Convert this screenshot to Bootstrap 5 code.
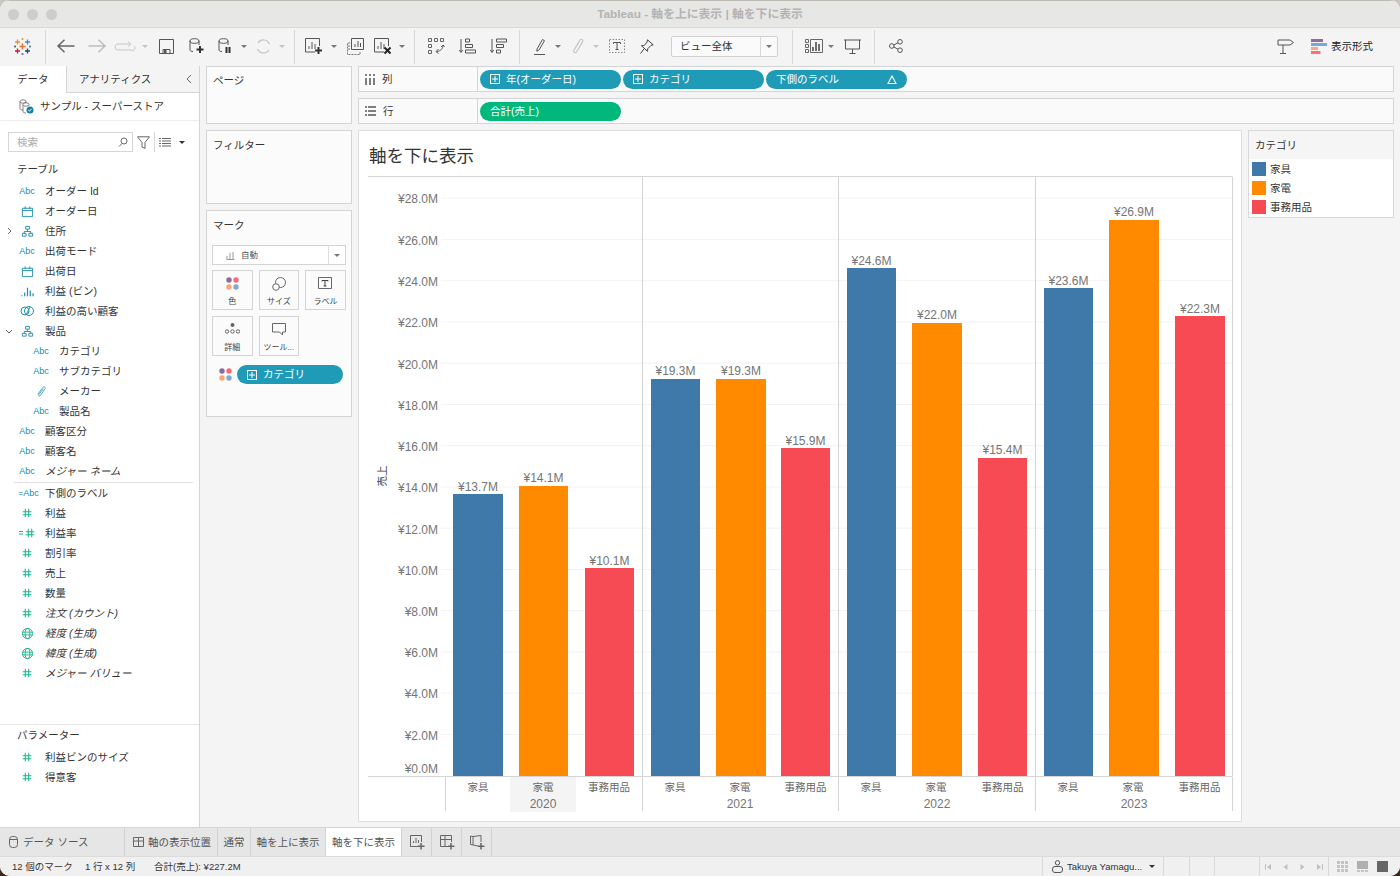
<!DOCTYPE html>
<html lang="ja">
<head>
<meta charset="utf-8">
<title>Tableau - 軸を上に表示 | 軸を下に表示</title>
<link href="https://cdn.jsdelivr.net/npm/bootstrap@5.3.0/dist/css/bootstrap.min.css" rel="stylesheet">
<style>
html,body{height:876px;overflow:hidden;}
body{background:linear-gradient(#c9c6bd 0 50%,#3b2a18 50%);font-family:"Liberation Sans","Noto Sans CJK JP",sans-serif;font-size:10.5px;color:#333;line-height:1.2;}
.win{height:876px;width:1400px;border-radius:10px;overflow:hidden;background:#f4f4f4;}
.titlebar{height:28px;background:#e7e7e5;border-bottom:1px solid #dadada;border-top:1px solid #bdbbb4;flex:none;}
.tl{width:11px;height:11px;border-radius:50%;background:#cdcdcb;}
.tl-wrap{left:8px;top:8px;gap:8px;}
.wintitle{font-size:11.8px;font-weight:700;color:#b3b3b3;}
.tbar{height:38px;flex:none;background:#f4f4f4;padding-right:27px;}
.tc{display:flex;align-items:center;justify-content:center;flex:none;height:38px;padding-bottom:2px;}
.tc svg{display:block;overflow:visible;}
.sepv{width:1px;height:34px;background:#d8d8d8;flex:none;}
.w4{width:4px}.w5{width:5px}.w8{width:8px}.w10{width:10px}.w12{width:12px}.w14{width:14px}.w15{width:15px}.w16{width:16px}.w18{width:18px}.w20{width:20px}.w22{width:22px}.w24{width:24px}.w26{width:26px}.w27{width:27px}.w28{width:28px}.w30{width:30px}.w32{width:32px}.w34{width:34px}.w42{width:42px}.w45{width:45px}
.car{width:0;height:0;border-left:3px solid transparent;border-right:3px solid transparent;border-top:3.5px solid #777;}
.car-off{border-top-color:#c4c4c4;}
.car-dark{border-top-color:#333;border-left-width:3.500px;border-right-width:3.500px;}
.viewsel{width:107px;height:21px;border:1px solid #d0d0d0;background:#fafafa;border-radius:2px;font-size:10.5px;margin-bottom:2px;}
.viewsel .lbl{flex:1;padding-left:8px;}
.viewsel .drop{width:17px;height:100%;border-left:1px solid #d8d8d8;}
.showme{font-size:10.5px;color:#222;margin-bottom:2px;}
.showme-ic{margin-left:17px;margin-right:4px;}
.mainrow{height:761px;flex:none;}
.side{width:200px;flex:none;background:#fff;border-right:1px solid #d4d4d4;}
.sidetabs{height:27px;flex:none;}
.stab{height:27px;font-size:10.5px;}
.stab-a{width:67px;padding-left:17px;border-right:1px solid #d4d4d4;}
.stab-b{flex:1;background:#f4f4f4;border-bottom:1px solid #d4d4d4;padding-left:12px;padding-right:7px;}
.dsrow{height:28px;flex:none;border-bottom:1px solid #ececec;padding-left:19px;gap:6px;}
.srch{padding:11px 0 0 8px;height:31px;flex:none;gap:4px;}
.srchbox{width:125px;height:20px;border:1px solid #d6d6d6;color:#aaa;font-size:10.5px;padding:0 4px 0 8px;}
.shead{height:22px;padding-left:17px;flex:none;font-size:10.5px;}
.shead-top{margin-top:6px;}
.flist{padding-top:1px;}
.fld{height:20px;flex:none;}
.fchev{width:18px;flex:none;}
.fic{width:18px;flex:none;color:#0f8db3;font-size:9px;}
.fname{margin-left:9px;white-space:nowrap;color:#333;}
.lvl{padding-left:14px;}
.ital{font-style:italic;}
.flsep{height:1px;background:#e2e2e2;margin:1px 6px 0 14px;flex:none;}
.params{height:103px;flex:none;border-top:1px solid #e6e6e6;}
.params .shead{height:20px;margin-bottom:2px;}
.midcol{width:146px;margin-left:6px;gap:6px;flex:none;}
.pane{background:#fbfbfb;border:1px solid #d4d4d4;border-radius:0;flex:none;}
.pane-t{padding:7px 6px 0;font-size:10.5px;line-height:13px;}
.flt .pane-t,.mk .pane-t{padding-top:8px;}
.pg{height:58px}.flt{height:74px}.mk{height:207px}
.mksel{margin:13px 5px 5px;height:20px;border:1px solid #d4d4d4;background:#fff;font-size:8.5px;color:#555;}
.mksel .drop{width:17px;height:100%;border-left:1px solid #dedede;}
.mksel-l{padding-left:13px;gap:6px;}
.mkgrid{padding:0 5px;gap:6px;width:144px;}
.mkbtn{width:40.6px;height:40px;border:1px solid #d4d4d4;background:#fbfbfb;font-size:8px;color:#444;padding:0;}
.mkbtn svg{margin-top:6px;flex:none;}
.mkbtn span{margin-top:auto;margin-bottom:2px;white-space:nowrap;}
.mkpill{margin:9px 0 0 12px;gap:5px;}
.pillx{height:19px;width:141px;background:#1f9bb8;color:#fff;border-radius:10px;padding:0 10px;font-size:10.5px;gap:6px;flex:none;}
.pillx-m{width:106px;}
.pillg{background:#00b87c;}
.rightcol{width:1036px;margin-left:6px;flex:none;}
.shelf{height:26px;border:1px solid #d4d4d4;background:#fafafa;margin-bottom:6px;flex:none;}
.shelf-l{width:119px;height:100%;border-right:1px solid #d4d4d4;padding-left:6px;gap:7px;font-size:10.5px;flex:none;}
.shelf-r{padding-left:2px;gap:2px;}
.cardvw{width:884px;height:692px;background:#fff;border:1px solid #dcdcdc;flex:none;}
.vtitle{height:45px;flex:none;font-size:17.5px;color:#333;padding:15px 0 0 10px;}
.chart{display:block;}
.chart text{font-family:"Liberation Sans","Noto Sans CJK JP",sans-serif;fill:#757575;font-size:12px;}
.chart .cat{font-size:10.5px;fill:#666;}
.chart .ytitle{font-size:10.5px;fill:#444;}
.lgd{width:146px;height:88px;margin-left:6px;background:#fff;border:1px solid #d8d8d8;flex:none;}
.lgd-h{height:28px;background:#f5f5f5;padding:8px 6px 0;font-size:10.5px;}
.lgd-b{padding:3px 0 0 3px;gap:5px;}
.lgd-r{gap:4px;height:14px;font-size:10.5px;}
.sw{width:14px;height:14px;flex:none;}
.sw-a{background:#3f79aa;}.sw-b{background:#ff8a00;}.sw-c{background:#f64a55;}
.tabbar{height:29px;flex:none;background:#e6e6e6;border-top:1px solid #d4d4d4;}
.tbc{height:100%;border-right:1px solid #d2d2d2;font-size:10.5px;color:#555;flex:none;}
.tbc svg{flex:none;}
.t0{width:125px;padding-left:9px;gap:5px;}
.t1{width:93px;padding-left:8px;gap:4px;}
.t2{width:33px;justify-content:center;}
.t3{width:75px;justify-content:center;}
.t4{width:76px;justify-content:center;background:#fff;}
.t5{width:30px;justify-content:center;padding-left:1px;}
.stbar{height:20px;flex:none;background:#f0f0f0;border-top:1px solid #dcdcdc;font-size:9.5px;color:#333;}
.stbar .st1{margin-left:12px;width:73px;}
.stbar .st2{width:69px;}
.stsep{width:1px;height:100%;background:#d8d8d8;flex:none;}
.user{width:120px;padding-left:5px;gap:4px;font-size:9.5px;}
.gapx{flex:none;}
.g25{width:25px}.g24{width:24px}.g44{width:44px}
.nav-a{width:68px;gap:0;}
.nav-a svg{flex:1;}
.views{width:71px;padding-left:8px;gap:9px;}
.srch .stsep{height:20px;}
</style>
</head>
<body>
<svg width="0" height="0" class="position-absolute">
  <defs>
    <symbol id="cal" viewBox="0 0 14 14"><path d="M1.5 3.5h11v9h-11zM1.5 6h11M4.5 1.5v3M9.5 1.5v3" fill="none" stroke="#1f8fb0" stroke-width="1"/></symbol>
    <symbol id="hier" viewBox="0 0 14 14"><path d="M5 1.5h4v3H5zM1.5 9h4v3h-4zM8.5 9h4v3h-4zM7 4.5V7M3.5 9V7h7v2" fill="none" stroke="#1f8fb0" stroke-width="1"/></symbol>
    <symbol id="bins" viewBox="0 0 14 14"><path d="M1 12v-1M4 12V8M7 12V3M10 12V6M13 12v-3" fill="none" stroke="#1f8fb0" stroke-width="1.3"/></symbol>
    <symbol id="setx" viewBox="0 0 14 14"><circle cx="5" cy="7" r="4" fill="none" stroke="#1f8fb0"/><circle cx="9" cy="7" r="4.5" fill="none" stroke="#1f8fb0"/><path d="M6 11l4-8" stroke="#1f8fb0"/></symbol>
    <symbol id="clip" viewBox="0 0 14 14"><path d="M3 10l5.500-7.500c1-1.300 3.500 0 2.500 1.500L5.500 11.500c-.8 1-2.200 0-1.500-1L9 4" fill="none" stroke="#3ba4bf" stroke-width="1"/></symbol>
    <symbol id="num" viewBox="0 0 14 14"><path d="M5 2v10M9 2v10M2 5.500h10M2 9h10" fill="none" stroke="#17b48a" stroke-width="1.200"/></symbol>
    <symbol id="globe" viewBox="0 0 14 14"><circle cx="7" cy="7" r="5.500" fill="none" stroke="#17b48a"/><ellipse cx="7" cy="7" rx="2.500" ry="5.500" fill="none" stroke="#17b48a"/><path d="M1.500 5.500h11M1.500 8.500h11" stroke="#17b48a"/></symbol>
    <symbol id="plusbox" viewBox="0 0 10 10"><rect x=".5" y=".5" width="9" height="9" fill="none" stroke="currentColor"/><path d="M5 2v6M2 5h6" stroke="currentColor"/></symbol>
    <symbol id="dots" viewBox="0 0 13 13"><circle cx="3" cy="3" r="2.700" fill="#8b6c9c"/><circle cx="10" cy="3" r="2.700" fill="#f76a7c"/><circle cx="3" cy="10" r="2.700" fill="#ffa36f"/><circle cx="10" cy="10" r="2.700" fill="#7eaad0"/></symbol>
  </defs>
</svg>
<div class="win d-flex flex-column">
  <header class="titlebar position-relative d-flex align-items-center justify-content-center">
    <div class="tl-wrap position-absolute d-flex"><span class="tl"></span><span class="tl"></span><span class="tl"></span></div>
    <span class="wintitle">Tableau - 軸を上に表示 | 軸を下に表示</span>
  </header>

  <div class="tbar d-flex align-items-center">
    <span class="tc w45"><svg width="17" height="17" viewBox="0 0 17 17"><g fill="none" stroke-width="1.300"><path d="M5.500 8.500h6M8.500 5.500v6" stroke="#e8762d" stroke-width="1.600"/><path d="M1 4h5M3.500 1.500v5" stroke="#eb9129"/><path d="M11 4h5M13.500 1.500v5" stroke="#5b879b"/><path d="M1 13h5M3.500 10.500v5" stroke="#c72035"/><path d="M11 13h5M13.500 10.500v5" stroke="#1f457e"/><path d="M7.500 1h2M8.500 0v2" stroke="#e5a24a"/><path d="M0 8.500h2M1 7.500v2" stroke="#5b6591"/><path d="M15 8.500h2M16 7.500v2" stroke="#5b879b"/><path d="M7.500 16h2M8.500 15v2" stroke="#5b879b"/></g></svg></span>
    <span class="sepv"></span><span class="w5"></span>
    <span class="tc w30"><svg width="18" height="14" viewBox="0 0 18 14"><path d="M17.500 7H1M7.500.7L1 7l6.500 6.300" fill="none" stroke="#666" stroke-width="1.500"/></svg></span>
    <span class="tc w32"><svg width="18" height="14" viewBox="0 0 18 14"><path d="M.5 7H17M10.500.7L17 7l-6.500 6.300" fill="none" stroke="#bcbcbc" stroke-width="1.500"/></svg></span>
    <span class="tc w24"><svg width="20" height="10" viewBox="0 0 20 10"><path d="M15 3H3a2 2 0 0 0 0 6h13a2 2 0 0 0 3-4M13 .5L16 3l-3 2.500" fill="none" stroke="#c8c8c8"/></svg></span>
    <span class="tc w16"><span class="car car-off"></span></span>
    <span class="tc w26"><svg width="15" height="15" viewBox="0 0 15 15"><path d="M.5.500h14v14H.5zM4 14.500v-4h7v4" fill="none" stroke="#555"/><path d="M5 11h2.500v3H5z" fill="#555"/></svg></span>
    <span class="tc w34"><svg width="15" height="16" viewBox="0 0 15 16"><path d="M1 3v9c0 1 1.500 1.500 3 1.500M10 3v4" fill="none" stroke="#555"/><ellipse cx="5.500" cy="3" rx="4.500" ry="2.300" fill="none" stroke="#555"/><path d="M11 8v7M7.500 11.500h7" stroke="#333" stroke-width="2"/></svg></span>
    <span class="tc w24"><svg width="15" height="16" viewBox="0 0 15 16"><path d="M1 3v9c0 1 1.500 1.500 3 1.500M10 3v4" fill="none" stroke="#555"/><ellipse cx="5.500" cy="3" rx="4.500" ry="2.300" fill="none" stroke="#555"/><path d="M8.500 9v6M11.500 9v6" stroke="#333" stroke-width="2"/></svg></span>
    <span class="tc w14"><span class="car"></span></span>
    <span class="tc w24"><svg width="15" height="15" viewBox="0 0 15 15"><path d="M13.500 5A6.500 6.500 0 0 0 2 4M1.500 10A6.500 6.500 0 0 0 13 11" fill="none" stroke="#c4c4c4" stroke-width="1.200"/></svg></span>
    <span class="tc w14"><span class="car car-off"></span></span>
    <span class="w5"></span><span class="sepv"></span><span class="w8"></span>
    <span class="tc w22"><svg width="18" height="17" viewBox="0 0 18 17"><path d="M10 14H.5V.5h14V8" fill="none" stroke="#555"/><path d="M4 11V8M7 11V4M10 11V6" stroke="#555"/><path d="M13.500 9v7M10 12.500h7" stroke="#333" stroke-width="2"/></svg></span>
    <span class="tc w18"><span class="car"></span></span>
    <span class="tc w24"><svg width="17" height="17" viewBox="0 0 17 17"><path d="M4.500.5h12v11h-12z" fill="#f4f4f4" stroke="#555"/><path d="M8 9V6M11 9V3M13.500 9V5" stroke="#555"/><path d="M3 5H.5v11.500H13V14M3 8H.5M3 11H.5" fill="none" stroke="#777" stroke-dasharray="2 1"/></svg></span>
    <span class="w4"></span>
    <span class="tc w24"><svg width="18" height="17" viewBox="0 0 18 17"><path d="M10 14H.5V.5h14V8" fill="none" stroke="#555"/><path d="M4 11V8M7 11V4M10 11V6" stroke="#555"/><path d="M10.500 9.500l6 6M16.500 9.500l-6 6" stroke="#222" stroke-width="2"/></svg></span>
    <span class="tc w14"><span class="car"></span></span>
    <span class="w5"></span><span class="sepv"></span>
    <span class="tc w42"><svg width="17" height="16" viewBox="0 0 17 16"><path d="M.5.500h3v3h-3zM6.500.500h3v3h-3zM12.500.500h3v3h-3zM.5 6.500h3v3h-3zM.5 12.500h3v3h-3z" fill="none" stroke="#666"/><path d="M15 7c0 4-2.500 6-6 6.500M10.500 11l-2.500 2.500 2.500 2M13 9l2-2 1.500 2" fill="none" stroke="#555"/></svg></span>
    <span class="tc w20"><svg width="17" height="16" viewBox="0 0 17 16"><path d="M2 1v13M.3 12L2 14.500 3.700 12" fill="none" stroke="#555"/><path d="M6.500 1h4v3h-4zM6.500 6.500h7v3h-7zM6.500 12h10v3h-10z" fill="none" stroke="#555"/></svg></span>
    <span class="tc w42"><svg width="17" height="16" viewBox="0 0 17 16"><path d="M2 1v13M.3 12L2 14.500 3.700 12" fill="none" stroke="#555"/><path d="M6.500 1h10v3h-10zM6.500 6.500h7v3h-7zM6.500 12h4v3h-4z" fill="none" stroke="#555"/></svg></span>
    <span class="sepv"></span><span class="w10"></span>
    <span class="tc w20"><svg width="12" height="17" viewBox="0 0 12 17"><path d="M3 11L8.500 1.500l2 1.200L5 12l-2.200 1.200zM0 16.500h11" fill="none" stroke="#555"/></svg></span>
    <span class="tc w15"><span class="car"></span></span>
    <span class="tc w26"><svg width="12" height="17" viewBox="0 0 12 17"><path d="M2 12L8 2c1-1.500 3.500-.3 2.800 1.400L4.500 14c-1 1.500-3.500.5-2.800-1.300L7 4" fill="none" stroke="#c4c4c4" stroke-width="1.100"/></svg></span>
    <span class="tc w10"><span class="car car-off"></span></span>
    <span class="tc w32"><svg width="16" height="14" viewBox="0 0 16 14"><path d="M.5.500h15v13H.5z" fill="none" stroke="#888" stroke-dasharray="1.500 1.500"/><path d="M4.500 3.500h7v1.500M8 3.500v7M6.500 10.500h3M4.500 3.500V5" fill="none" stroke="#555"/></svg></span>
    <span class="tc w28"><svg width="14" height="15" viewBox="0 0 14 15"><path d="M7.500.8l5.700 5-2.200.6-3.300 3.400-.2 2.500L1.500 6.800l2.700-.3L7 3.200zM4 10l-3.500 4.500" fill="none" stroke="#444"/></svg></span>
    <span class="w10"></span>
    <div class="viewsel d-flex align-items-center flex-none"><span class="lbl">ビュー全体</span><span class="drop d-flex align-items-center justify-content-center"><span class="car"></span></span></div>
    <span class="w14"></span><span class="sepv"></span><span class="w12"></span>
    <span class="tc w18"><svg width="18" height="14" viewBox="0 0 18 14"><path d="M.5.500h3v3h-3zM.5 5.500h3v3h-3zM.5 10.500h3v3h-3zM5.500.5h12v13h-12z" fill="none" stroke="#666"/><path d="M8 12V8M11 12V3M14 12V5" stroke="#444" stroke-width="1.500"/></svg></span>
    <span class="tc w16"><span class="car"></span></span>
    <span class="tc w27"><svg width="17" height="15" viewBox="0 0 17 15"><path d="M0 1h17M1.500 1v9h14V1M8.500 10v4.500M5.500 14.500h6" fill="none" stroke="#555"/></svg></span>
    <span class="w8"></span><span class="sepv"></span>
    <span class="tc w42"><svg width="14" height="14" viewBox="0 0 14 14"><circle cx="2.800" cy="7" r="2.300" fill="none" stroke="#555"/><circle cx="11" cy="2.800" r="2.300" fill="none" stroke="#555"/><circle cx="11" cy="11.200" r="2.300" fill="none" stroke="#555"/><path d="M4.800 6l4.200-2.200M4.800 8l4.200 2.200" stroke="#555"/></svg></span>
    <div class="ms-auto d-flex align-items-center showme">
      <svg width="17" height="15" viewBox="0 0 17 15"><path d="M1 1h12l3.500 2.500L13 6H1zM6 6v8.500M3 14.500h6" fill="none" stroke="#555"/></svg>
      <svg class="showme-ic" width="16" height="15" viewBox="0 0 16 15"><rect width="12" height="3" fill="#8d6f98"/><rect y="4" width="16" height="3" fill="#7aa8d0"/><rect y="8" width="7" height="3" fill="#ffa77c"/><rect y="12" width="9.500" height="3" fill="#ff6e7f"/></svg>
      <span>表示形式</span>
    </div>
  </div>

  <div class="mainrow d-flex">
    <aside class="side d-flex flex-column">
      <div class="sidetabs d-flex">
        <div class="stab stab-a d-flex align-items-center">データ</div>
        <div class="stab stab-b d-flex align-items-center justify-content-between"><span>アナリティクス</span><svg width="6" height="10" viewBox="0 0 6 10"><path d="M5 1L1 5l4 4" fill="none" stroke="#666"/></svg></div>
      </div>
      <div class="dsrow d-flex align-items-center">
        <svg width="15" height="15" viewBox="0 0 15 15"><path d="M1 2.500v7c0 1 1.500 1.500 3 1.500M7 2.500v2M4 5.500v7c0 1 1.500 1.500 3 1.500M10 5.500v1" fill="none" stroke="#666" stroke-width=".8"/><ellipse cx="4" cy="2.500" rx="3" ry="1.700" fill="none" stroke="#666" stroke-width=".8"/><ellipse cx="7" cy="5.500" rx="3" ry="1.700" fill="#fff" stroke="#666" stroke-width=".8"/><circle cx="11" cy="11" r="3.500" fill="#1183a8"/><path d="M9.300 11l1.200 1.200 2-2.300" fill="none" stroke="#fff"/></svg>
        <span>サンプル - スーパーストア</span>
      </div>
      <div class="srch d-flex align-items-center">
        <div class="srchbox d-flex align-items-center justify-content-between"><span>検索</span><svg width="10" height="10" viewBox="0 0 10 10"><circle cx="6" cy="4" r="3" fill="none" stroke="#666"/><path d="M4 6.500L1 9.500" stroke="#666"/></svg></div>
        <svg width="13" height="13" viewBox="0 0 13 13"><path d="M.5.800h12L8 6.500v6L5 11V6.500z" fill="none" stroke="#666"/></svg>
        <span class="stsep"></span>
        <svg width="12" height="9" viewBox="0 0 12 9"><path d="M0 .5h2M0 3h2M0 5.500h2M0 8h2M3 .5h9M3 3h9M3 5.500h9M3 8h9" stroke="#666"/></svg>
        <span class="car car-dark ms-1"></span>
      </div>
      <div class="shead shead-top d-flex align-items-center">テーブル</div>
      <div class="flist d-flex flex-column flex-grow-1">
        <div class="fld d-flex align-items-center"><span class="fchev"></span><span class="fic text-center">Abc</span><span class="fname">オーダー Id</span></div>
        <div class="fld d-flex align-items-center"><span class="fchev"></span><span class="fic d-flex justify-content-center"><svg width="13" height="13"><use href="#cal"/></svg></span><span class="fname">オーダー日</span></div>
        <div class="fld d-flex align-items-center"><span class="fchev d-flex justify-content-center"><svg width="5" height="8" viewBox="0 0 5 8"><path d="M1 1l3 3-3 3" fill="none" stroke="#666"/></svg></span><span class="fic d-flex justify-content-center"><svg width="13" height="13"><use href="#hier"/></svg></span><span class="fname">住所</span></div>
        <div class="fld d-flex align-items-center"><span class="fchev"></span><span class="fic text-center">Abc</span><span class="fname">出荷モード</span></div>
        <div class="fld d-flex align-items-center"><span class="fchev"></span><span class="fic d-flex justify-content-center"><svg width="13" height="13"><use href="#cal"/></svg></span><span class="fname">出荷日</span></div>
        <div class="fld d-flex align-items-center"><span class="fchev"></span><span class="fic d-flex justify-content-center"><svg width="13" height="13"><use href="#bins"/></svg></span><span class="fname">利益 (ビン)</span></div>
        <div class="fld d-flex align-items-center"><span class="fchev"></span><span class="fic d-flex justify-content-center"><svg width="14" height="14"><use href="#setx"/></svg></span><span class="fname">利益の高い顧客</span></div>
        <div class="fld d-flex align-items-center"><span class="fchev d-flex justify-content-center"><svg width="8" height="5" viewBox="0 0 8 5"><path d="M1 1l3 3 3-3" fill="none" stroke="#666"/></svg></span><span class="fic d-flex justify-content-center"><svg width="13" height="13"><use href="#hier"/></svg></span><span class="fname">製品</span></div>
        <div class="fld lvl d-flex align-items-center"><span class="fchev"></span><span class="fic text-center">Abc</span><span class="fname">カテゴリ</span></div>
        <div class="fld lvl d-flex align-items-center"><span class="fchev"></span><span class="fic text-center">Abc</span><span class="fname">サブカテゴリ</span></div>
        <div class="fld lvl d-flex align-items-center"><span class="fchev"></span><span class="fic d-flex justify-content-center"><svg width="13" height="13"><use href="#clip"/></svg></span><span class="fname">メーカー</span></div>
        <div class="fld lvl d-flex align-items-center"><span class="fchev"></span><span class="fic text-center">Abc</span><span class="fname">製品名</span></div>
        <div class="fld d-flex align-items-center"><span class="fchev"></span><span class="fic text-center">Abc</span><span class="fname">顧客区分</span></div>
        <div class="fld d-flex align-items-center"><span class="fchev"></span><span class="fic text-center">Abc</span><span class="fname">顧客名</span></div>
        <div class="fld d-flex align-items-center"><span class="fchev"></span><span class="fic text-center">Abc</span><span class="fname ital">メジャー ネーム</span></div>
        <div class="flsep"></div>
        <div class="fld d-flex align-items-center"><span class="fchev"></span><span class="fic text-center text-nowrap">=Abc</span><span class="fname">下側のラベル</span></div>
        <div class="fld d-flex align-items-center"><span class="fchev"></span><span class="fic d-flex justify-content-center"><svg width="12" height="12"><use href="#num"/></svg></span><span class="fname">利益</span></div>
        <div class="fld d-flex align-items-center"><span class="fchev"></span><span class="fic d-flex align-items-center justify-content-end"><svg width="5" height="4" viewBox="0 0 5 4"><path d="M0 .5h4M0 3h4" stroke="#17b48a"/></svg><svg width="12" height="12"><use href="#num"/></svg></span><span class="fname">利益率</span></div>
        <div class="fld d-flex align-items-center"><span class="fchev"></span><span class="fic d-flex justify-content-center"><svg width="12" height="12"><use href="#num"/></svg></span><span class="fname">割引率</span></div>
        <div class="fld d-flex align-items-center"><span class="fchev"></span><span class="fic d-flex justify-content-center"><svg width="12" height="12"><use href="#num"/></svg></span><span class="fname">売上</span></div>
        <div class="fld d-flex align-items-center"><span class="fchev"></span><span class="fic d-flex justify-content-center"><svg width="12" height="12"><use href="#num"/></svg></span><span class="fname">数量</span></div>
        <div class="fld d-flex align-items-center"><span class="fchev"></span><span class="fic d-flex justify-content-center"><svg width="12" height="12"><use href="#num"/></svg></span><span class="fname ital">注文 (カウント)</span></div>
        <div class="fld d-flex align-items-center"><span class="fchev"></span><span class="fic d-flex justify-content-center"><svg width="13" height="13"><use href="#globe"/></svg></span><span class="fname ital">経度 (生成)</span></div>
        <div class="fld d-flex align-items-center"><span class="fchev"></span><span class="fic d-flex justify-content-center"><svg width="13" height="13"><use href="#globe"/></svg></span><span class="fname ital">緯度 (生成)</span></div>
        <div class="fld d-flex align-items-center"><span class="fchev"></span><span class="fic d-flex justify-content-center"><svg width="12" height="12"><use href="#num"/></svg></span><span class="fname ital">メジャー バリュー</span></div>
      </div>
      <div class="params d-flex flex-column">
        <div class="shead d-flex align-items-center">パラメーター</div>
        <div class="fld d-flex align-items-center"><span class="fchev"></span><span class="fic d-flex justify-content-center"><svg width="12" height="12"><use href="#num"/></svg></span><span class="fname">利益ビンのサイズ</span></div>
        <div class="fld d-flex align-items-center"><span class="fchev"></span><span class="fic d-flex justify-content-center"><svg width="12" height="12"><use href="#num"/></svg></span><span class="fname">得意客</span></div>
      </div>
    </aside>

    <div class="midcol d-flex flex-column">
      <div class="pane pg"><div class="pane-t">ページ</div></div>
      <div class="pane flt"><div class="pane-t">フィルター</div></div>
      <div class="pane mk">
        <div class="pane-t">マーク</div>
        <div class="mksel d-flex align-items-center">
          <span class="mksel-l flex-grow-1 d-flex align-items-center"><svg width="9" height="9" viewBox="0 0 9 9"><path d="M1 8V5M4 8V2M7 8V1M.5 8.500h8" stroke="#999"/></svg>自動</span>
          <span class="drop d-flex align-items-center justify-content-center"><span class="car"></span></span>
        </div>
        <div class="mkgrid d-flex flex-wrap">
          <button type="button" class="mkbtn d-flex flex-column align-items-center"><svg width="13" height="13"><use href="#dots"/></svg><span>色</span></button>
          <button type="button" class="mkbtn d-flex flex-column align-items-center"><svg width="14" height="14" viewBox="0 0 14 14"><circle cx="8.500" cy="5.500" r="5" fill="none" stroke="#666"/><circle cx="4" cy="10" r="3.300" fill="#fbfbfb" stroke="#666"/></svg><span>サイズ</span></button>
          <button type="button" class="mkbtn d-flex flex-column align-items-center"><svg width="14" height="12" viewBox="0 0 14 12"><path d="M.5.500h13v11H.5z" fill="none" stroke="#666"/><path d="M4 3.500h6M7 3.500v5.500M5.500 9h3M4 3.500v1M10 3.500v1" fill="none" stroke="#444"/></svg><span>ラベル</span></button>
          <button type="button" class="mkbtn d-flex flex-column align-items-center"><svg width="15" height="11" viewBox="0 0 15 11"><circle cx="7.500" cy="2" r="2" fill="#666"/><circle cx="2" cy="8.500" r="1.700" fill="none" stroke="#666"/><circle cx="7.500" cy="8.500" r="1.700" fill="none" stroke="#666"/><circle cx="13" cy="8.500" r="1.700" fill="none" stroke="#666"/></svg><span>詳細</span></button>
          <button type="button" class="mkbtn d-flex flex-column align-items-center"><svg width="14" height="13" viewBox="0 0 14 13"><path d="M.5.500h13v8.500h-3v3l-3-3H.5z" fill="none" stroke="#666"/></svg><span>ツール...</span></button>
        </div>
        <div class="mkpill d-flex align-items-center">
          <svg width="13" height="13"><use href="#dots"/></svg>
          <div class="pillx pillx-m d-flex align-items-center"><svg width="10" height="10"><use href="#plusbox"/></svg><span>カテゴリ</span></div>
        </div>
      </div>
    </div>

    <div class="rightcol d-flex flex-column">
      <div class="shelf d-flex align-items-center">
        <div class="shelf-l d-flex align-items-center"><svg width="10" height="11" viewBox="0 0 10 11"><path d="M1 4v7M5 4v7M9 4v7M1 0v2M5 0v2M9 0v2" stroke="#555" stroke-width="1.500"/></svg><span>列</span></div>
        <div class="shelf-r d-flex align-items-center">
          <div class="pillx d-flex align-items-center"><svg width="10" height="10"><use href="#plusbox"/></svg><span>年(オーダー日)</span></div>
          <div class="pillx d-flex align-items-center"><svg width="10" height="10"><use href="#plusbox"/></svg><span>カテゴリ</span></div>
          <div class="pillx d-flex align-items-center justify-content-between"><span>下側のラベル</span><svg width="10" height="9" viewBox="0 0 10 9"><path d="M5 1l4 7.500H1z" fill="none" stroke="#fff" stroke-width="1.100"/></svg></div>
        </div>
      </div>
      <div class="shelf d-flex align-items-center">
        <div class="shelf-l d-flex align-items-center"><svg width="11" height="10" viewBox="0 0 11 10"><path d="M0 1h2M0 5h2M0 9h2M3 1h8M3 5h8M3 9h8" stroke="#555" stroke-width="1.300"/></svg><span>行</span></div>
        <div class="shelf-r d-flex align-items-center"><div class="pillx pillg d-flex align-items-center"><span>合計(売上)</span></div></div>
      </div>
      <div class="d-flex align-items-start">
        <div class="cardvw d-flex flex-column">
          <div class="vtitle">軸を下に表示</div>
          <svg class="chart" width="882" height="645" viewBox="359 176 882 645">
            <rect x="510" y="777" width="66" height="35" fill="#f4f4f4"/>
            <g stroke="#f3f3f3" stroke-width="1">
              <path d="M441 198H1232M441 239.500H1232M441 280.700H1232M441 322H1232M441 363.200H1232M441 404.500H1232M441 445.700H1232M441 487H1232M441 528.200H1232M441 569.500H1232M441 610.700H1232M441 652H1232M441 693.200H1232M441 734.500H1232"/>
            </g>
            <g fill="#3f79aa"><rect x="453" y="494" width="50" height="282"/><rect x="651" y="379" width="49" height="397"/><rect x="847" y="268" width="49" height="508"/><rect x="1044" y="288" width="49" height="488"/></g>
            <g fill="#ff8a00"><rect x="519" y="486" width="49" height="290"/><rect x="716" y="379" width="50" height="397"/><rect x="912" y="323" width="50" height="453"/><rect x="1109" y="220" width="50" height="556"/></g>
            <g fill="#f64a55"><rect x="585" y="568" width="49" height="208"/><rect x="781" y="448" width="49" height="328"/><rect x="978" y="458" width="49" height="318"/><rect x="1175" y="316" width="50" height="460"/></g>
            <g stroke="#d4d4d4" stroke-width="1" fill="none">
              <path d="M368 176.500H1232.500M642.500 177V776M838.500 177V776M1035.500 177V776M1232.500 177V776M368 776.500H1232.500M445.500 777V811M642.500 777V811M838.500 777V811M1035.500 777V811M1232.500 777V811"/>
            </g>
            <g text-anchor="end">
              <text x="438" y="203">¥28.0M</text><text x="438" y="245">¥26.0M</text><text x="438" y="286">¥24.0M</text><text x="438" y="327">¥22.0M</text><text x="438" y="369">¥20.0M</text><text x="438" y="410">¥18.0M</text><text x="438" y="451">¥16.0M</text><text x="438" y="492">¥14.0M</text><text x="438" y="534">¥12.0M</text><text x="438" y="575">¥10.0M</text><text x="438" y="616">¥8.0M</text><text x="438" y="657">¥6.0M</text><text x="438" y="698">¥4.0M</text><text x="438" y="740">¥2.0M</text><text x="438" y="773">¥0.0M</text>
            </g>
            <text class="ytitle" transform="translate(386,476) rotate(-90)" text-anchor="middle">売上</text>
            <g text-anchor="middle">
              <text x="478" y="491">¥13.7M</text><text x="543.500" y="482">¥14.1M</text><text x="609.500" y="565">¥10.1M</text>
              <text x="675.500" y="375">¥19.3M</text><text x="741" y="375">¥19.3M</text><text x="805.500" y="445">¥15.9M</text>
              <text x="871.500" y="265">¥24.6M</text><text x="937" y="319">¥22.0M</text><text x="1002.500" y="454">¥15.4M</text>
              <text x="1068.500" y="285">¥23.6M</text><text x="1134" y="216">¥26.9M</text><text x="1200" y="313">¥22.3M</text>
              <text class="cat" x="478" y="791">家具</text><text class="cat" x="543" y="791">家電</text><text class="cat" x="609" y="791">事務用品</text>
              <text class="cat" x="675" y="791">家具</text><text class="cat" x="740" y="791">家電</text><text class="cat" x="805.500" y="791">事務用品</text>
              <text class="cat" x="871" y="791">家具</text><text class="cat" x="936" y="791">家電</text><text class="cat" x="1002.500" y="791">事務用品</text>
              <text class="cat" x="1068" y="791">家具</text><text class="cat" x="1133" y="791">家電</text><text class="cat" x="1199.500" y="791">事務用品</text>
              <text x="543" y="808">2020</text><text x="740" y="808">2021</text><text x="937" y="808">2022</text><text x="1134" y="808">2023</text>
            </g>
          </svg>
        </div>
        <div class="lgd d-flex flex-column">
          <div class="lgd-h">カテゴリ</div>
          <div class="lgd-b d-flex flex-column">
            <div class="lgd-r d-flex align-items-center"><span class="sw sw-a"></span><span>家具</span></div>
            <div class="lgd-r d-flex align-items-center"><span class="sw sw-b"></span><span>家電</span></div>
            <div class="lgd-r d-flex align-items-center"><span class="sw sw-c"></span><span>事務用品</span></div>
          </div>
        </div>
      </div>
    </div>
  </div>

  <div class="tabbar d-flex align-items-center">
    <div class="tbc t0 d-flex align-items-center"><svg width="9" height="12" viewBox="0 0 9 12"><rect x=".5" y=".5" width="8" height="11" rx="3" fill="none" stroke="#666"/><path d="M.5 3.500h8" stroke="#666"/></svg><span>データ ソース</span></div>
    <div class="tbc t1 d-flex align-items-center"><svg width="11" height="10" viewBox="0 0 11 10"><path d="M.5.500h10v9H.5zM.5 4h10M5.500.5v9" fill="none" stroke="#666"/></svg><span>軸の表示位置</span></div>
    <div class="tbc t2 d-flex align-items-center">通常</div>
    <div class="tbc t3 d-flex align-items-center">軸を上に表示</div>
    <div class="tbc t4 d-flex align-items-center">軸を下に表示</div>
    <div class="tbc t5 d-flex align-items-center"><svg width="15" height="15" viewBox="0 0 15 15"><path d="M8 11.500H.5V.5h11V7" fill="none" stroke="#666"/><path d="M3.500 8V6M6 8V3M8.500 8V5" stroke="#666"/><path d="M11 8v6.500M8 11.200h6.500" stroke="#666" stroke-width="1.500"/></svg></div>
    <div class="tbc t5 d-flex align-items-center"><svg width="15" height="15" viewBox="0 0 15 15"><path d="M8 11.500H.5V.5h11V7M.5 4.500h11M5 .5v11" fill="none" stroke="#666"/><path d="M11 8v6.500M8 11.200h6.500" stroke="#666" stroke-width="1.500"/></svg></div>
    <div class="tbc t5 d-flex align-items-center"><svg width="15" height="15" viewBox="0 0 15 15"><path d="M8 11L3 10V1.500L11 .5V7M3 1.500L.5 1v8.500L3 10" fill="none" stroke="#666"/><path d="M11 8v6.500M8 11.200h6.500" stroke="#666" stroke-width="1.500"/></svg></div>
  </div>
  <footer class="stbar d-flex align-items-center">
    <span class="st1">12 個のマーク</span><span class="st2">1 行 x 12 列</span><span>合計(売上): ¥227.2M</span>
    <span class="stsep ms-auto"></span>
    <div class="user d-flex align-items-center"><svg class="ms-1" width="11" height="13" viewBox="0 0 11 13"><circle cx="5.500" cy="2.800" r="2.200" fill="none" stroke="#555"/><rect x=".5" y="6.500" width="10" height="6" rx="2.500" fill="none" stroke="#555"/></svg><span class="text-nowrap flex-grow-1">Takuya Yamagu...</span><span class="car car-dark me-2"></span></div>
    <span class="stsep"></span><span class="gapx g25"></span><span class="stsep"></span><span class="gapx g24"></span><span class="stsep"></span><span class="gapx g44"></span><span class="stsep"></span>
    <div class="nav-a d-flex align-items-center">
      <svg width="8" height="8" viewBox="0 0 8 8"><path d="M1 1v6" stroke="#c0c0c0"/><path d="M6.500 1v6L2.500 4z" fill="#c0c0c0"/></svg>
      <svg width="8" height="8" viewBox="0 0 8 8"><path d="M6 1v6L2 4z" fill="#c0c0c0"/></svg>
      <svg width="8" height="8" viewBox="0 0 8 8"><path d="M2 1v6l4-3z" fill="#c0c0c0"/></svg>
      <svg width="8" height="8" viewBox="0 0 8 8"><path d="M7 1v6" stroke="#c0c0c0"/><path d="M1.500 1v6l4-3z" fill="#c0c0c0"/></svg>
    </div>
    <span class="stsep"></span>
    <div class="views d-flex align-items-center">
      <svg width="11" height="11" viewBox="0 0 11 11"><path d="M0 1.500h11M0 5.500h11M0 9.500h11" stroke="#c4c4c4" stroke-width="3" stroke-dasharray="3 1"/></svg>
      <svg width="11" height="11" viewBox="0 0 11 11"><rect width="11" height="8" fill="#b0b0b0"/><path d="M0 10h11" stroke="#c4c4c4" stroke-width="2" stroke-dasharray="3 1"/></svg>
      <svg width="11" height="11" viewBox="0 0 11 11"><rect width="11" height="11" fill="#666"/></svg>
    </div>
  </footer>
</div>
</body>
</html>
